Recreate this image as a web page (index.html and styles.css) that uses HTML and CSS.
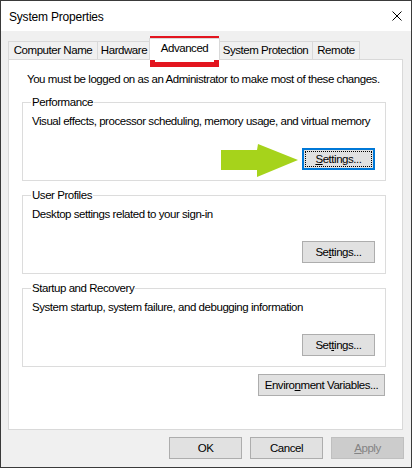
FILE: index.html
```html
<!DOCTYPE html>
<html>
<head>
<meta charset="utf-8">
<link rel="stylesheet" href="styles.css">
</head>
<body>
<div class="window">
  <div class="titlebar">
    <span class="title">System Properties</span>
    <svg class="close" width="10" height="10" viewBox="0 0 10 10"><path d="M0.5 0.5 L9.5 9.5 M9.5 0.5 L0.5 9.5" stroke="#000" stroke-width="1" fill="none"/></svg>
  </div>
  <div class="main">
    <div class="tabs">
      <div class="tab tab-cn">Computer Name</div>
      <div class="tab tab-hw">Hardware</div>
      <div class="tab tab-adv selected">Advanced</div>
      <div class="tab tab-sp">System Protection</div>
      <div class="tab tab-rm">Remote</div>
    </div>
    <div class="panel">
      <p class="note">You must be logged on as an Administrator to make most of these changes.</p>
      <fieldset class="group">
        <legend>Performance</legend>
        <p class="desc">Visual effects, processor scheduling, memory usage, and virtual memory</p>
        <div class="btn-row"><button class="btn settings default"><span class="focus"><u>S</u>ettings...</span></button></div>
      </fieldset>
      <fieldset class="group">
        <legend>User Profiles</legend>
        <p class="desc">Desktop settings related to your sign-in</p>
        <div class="btn-row"><button class="btn settings">Se<u>t</u>tings...</button></div>
      </fieldset>
      <fieldset class="group">
        <legend>Startup and Recovery</legend>
        <p class="desc">System startup, system failure, and debugging information</p>
        <div class="btn-row"><button class="btn settings">Set<u>t</u>ings...</button></div>
      </fieldset>
      <div class="env-row"><button class="btn env">Enviro<u>n</u>ment Variables...</button></div>
    </div>
    <div class="footer">
      <button class="btn dlg">OK</button>
      <button class="btn dlg">Cancel</button>
      <button class="btn dlg disabled"><u>A</u>pply</button>
    </div>
  </div>
</div>
<div class="highlight"></div>
<svg class="arrow" width="82" height="40" viewBox="0 0 82 40"><polygon points="2,9 38,9 39,3 79,19 38,36 38,29 2,29" fill="#a6d31b"/></svg>
</body>
</html>
```
FILE: styles.css
```css
html, body {
  margin: 0;
  padding: 0;
}
body {
  background: #1d2a24;
  position: relative;
  width: 412px;
  height: 468px;
  overflow: hidden;
  font-family: "Liberation Sans", Arial, sans-serif;
  font-size: 11.5px;
  letter-spacing: -0.45px;
  color: #000;
}
.window {
  width: 410px;
  height: 466px;
  border: 1px solid #3a3a3a;
  background: #f0f0f0;
  display: flex;
  flex-direction: column;
}
.titlebar {
  height: 30px;
  background: #fff;
  display: flex;
  align-items: center;
  justify-content: space-between;
  padding: 0 9px 0 8px;
}
.title {
  font-size: 12px;
  letter-spacing: -0.2px;
  margin-top: 1px;
}
.close {
  display: block;
}
.main {
  flex: 1;
  padding: 10px 7px 0 7px;
  display: flex;
  flex-direction: column;
}
.tabs {
  height: 18px;
  display: flex;
  align-items: flex-end;
  position: relative;
  z-index: 1;
}
.tab {
  box-sizing: border-box;
  height: 18px;
  border: 1px solid #d9d9d9;
  border-bottom: none;
  background: #f0f0f0;
  text-align: center;
  line-height: 17px;
  white-space: nowrap;
}
.tab-cn { width: 90px; }
.tab-hw { width: 54px; margin-left: -1px; }
.tab-adv { width: 71px; margin-left: -2px; }
.tab-sp { width: 95px; margin-left: -2px; }
.tab-rm { width: 48px; margin-left: -1px; }
.tab.selected {
  height: 22px;
  background: #fff;
  margin-bottom: -1px;
  line-height: 18px;
  position: relative;
}
.panel {
  box-sizing: border-box;
  width: 395px;
  height: 371px;
  background: #fff;
  border: 1px solid #d9d9d9;
  padding: 12px 16px 0 13px;
}
.note {
  margin: 0 0 8px 5px;
  line-height: 15px;
}
.group {
  margin: 0 0 7px 0;
  border: 1px solid #dcdcdc;
  padding: 0 10px 10px 9px;
  min-inline-size: 0;
}
.group legend {
  padding: 0 1px;
  margin-left: -1px;
  line-height: 14px;
}
.desc {
  margin: 5px 0 0 0;
  line-height: 15px;
}
.btn-row {
  display: flex;
  justify-content: flex-end;
  margin-top: 19px;
}
.btn {
  box-sizing: border-box;
  height: 22px;
  background: #e1e1e1;
  border: 1px solid #adadad;
  font-family: inherit;
  font-size: 11.5px;
  letter-spacing: -0.45px;
  color: #000;
  padding: 0;
  margin: 0;
  display: flex;
  align-items: center;
  justify-content: center;
}
.btn u {
  text-underline-offset: 1px;
}
.settings { width: 73px; }
.default {
  border: 2px solid #0078d7;
  padding: 1px;
}
.focus {
  flex: 1;
  align-self: stretch;
  display: flex;
  align-items: center;
  justify-content: center;
  outline: 1px dotted #000;
  outline-offset: -1px;
}
.env-row {
  display: flex;
  justify-content: flex-end;
  margin-top: 6px;
  padding-right: 1px;
}
.env { width: 127px; }
.footer {
  display: flex;
  justify-content: flex-end;
  gap: 8px;
  padding-top: 7px;
}
.dlg { width: 73px; }
.disabled {
  background: #cccccc;
  border-color: #bfbfbf;
  color: #838383;
}
.highlight {
  position: absolute;
  left: 150px;
  top: 36px;
  width: 59px;
  height: 21px;
  border: 5px solid #e3151f;
}
.arrow {
  position: absolute;
  left: 219px;
  top: 141px;
}
```
